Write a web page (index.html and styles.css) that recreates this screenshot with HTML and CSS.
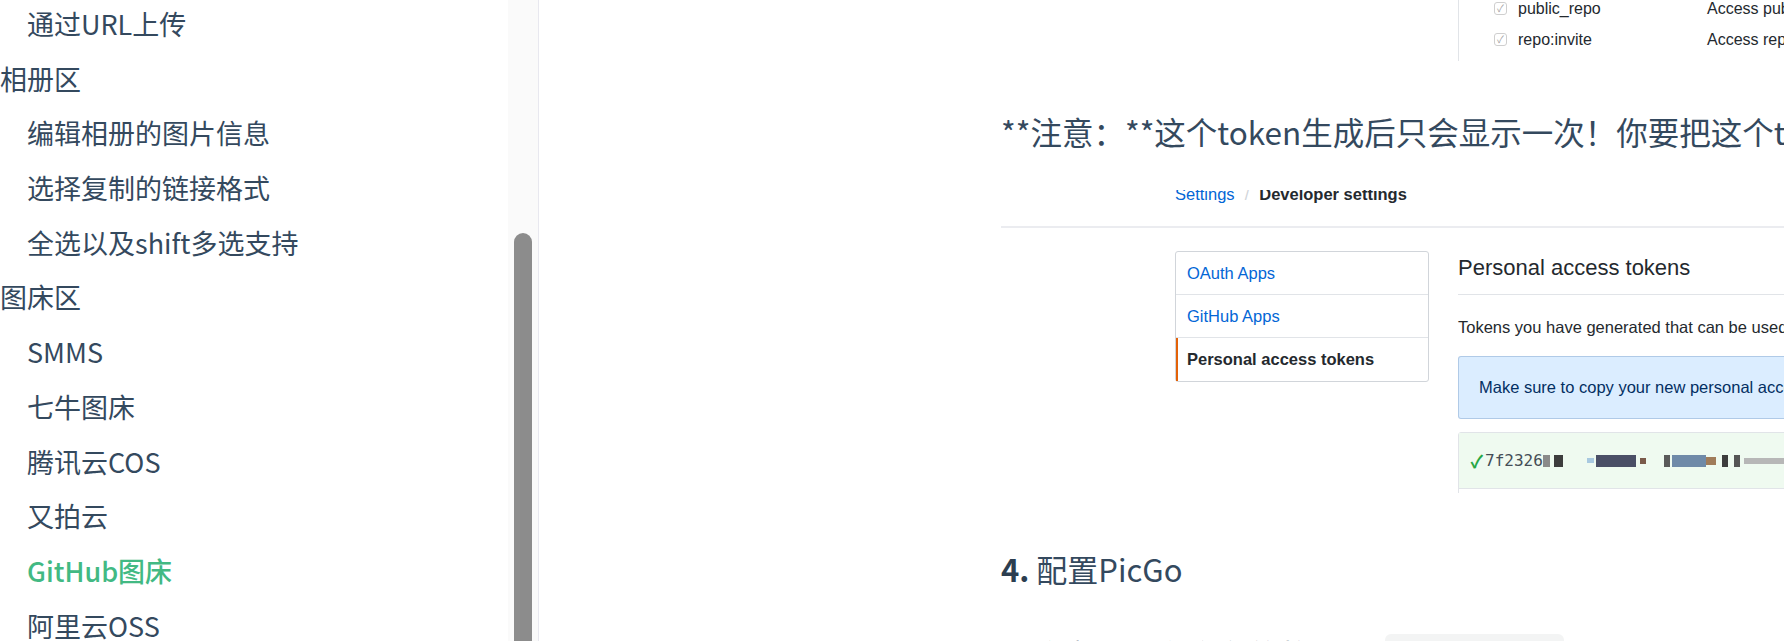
FILE: index.html
```html
<!DOCTYPE html>
<html lang="zh-CN">
<head>
<meta charset="utf-8">
<title>PicGo</title>
<link rel="stylesheet" href="styles.css">
</head>
<body>
<aside class="sidebar">
  <nav class="nav">
    <ul class="toc">
      <li class="sub">通过URL上传</li>
      <li class="top">相册区</li>
      <li class="sub">编辑相册的图片信息</li>
      <li class="sub">选择复制的链接格式</li>
      <li class="sub">全选以及shift多选支持</li>
      <li class="top">图床区</li>
      <li class="sub">SMMS</li>
      <li class="sub">七牛图床</li>
      <li class="sub">腾讯云COS</li>
      <li class="sub">又拍云</li>
      <li class="sub active">GitHub图床</li>
      <li class="sub">阿里云OSS</li>
    </ul>
  </nav>
  <div class="track"><div class="thumb"></div></div>
</aside>
<main class="main">
  <div class="content">
    <div class="shot scopes">
      <div class="scopes-left"></div>
      <div class="scopes-list">
        <div class="scope-row"><span class="cbox">✓</span><span class="scope-name">public_repo</span><span class="scope-desc">Access public repositories</span></div>
        <div class="scope-row"><span class="cbox">✓</span><span class="scope-name">repo:invite</span><span class="scope-desc">Access repository invitations</span></div>
      </div>
    </div>

    <p class="para">**注意：**这个token生成后只会显示一次！你要把这个token复制一下存到安全的地方。</p>

    <div class="shot gh">
      <div class="gh-header">
        <div class="crumbs"><span class="crumb-link">Settings</span><span class="crumb-sep">/</span><span class="crumb-cur">Developer settings</span></div>
      </div>
      <div class="gh-body">
        <div class="gh-menu">
          <div class="gh-item link">OAuth Apps</div>
          <div class="gh-item link">GitHub Apps</div>
          <div class="gh-item selected">Personal access tokens</div>
        </div>
        <div class="gh-panel">
          <div class="gh-title">Personal access tokens</div>
          <div class="gh-text">Tokens you have generated that can be used to access the GitHub API.</div>
          <div class="gh-flash">Make sure to copy your new personal access token now. You won’t be able to see it again!</div>
          <div class="gh-list">
            <div class="gh-token"><span class="tick">✓</span><span class="tok">7f2326</span><span class="px p1"></span><span class="px p2"></span><span class="px p3"></span><span class="px p4"></span><span class="px p5"></span><span class="px p6"></span><span class="px p7"></span><span class="px p8"></span><span class="px p9"></span><span class="px p10"></span><span class="px p11"></span></div>
            <div class="gh-rest"></div>
          </div>
        </div>
      </div>
    </div>

    <h3 class="h3"><strong>4.</strong> 配置PicGo</h3>

    <p class="para last">**注意：**仓库名的格式是<code class="code">用户名/仓库</code>，比如我创建了一个叫做<code class="code">test</code>的仓库。</p>
  </div>
</main>
</body>
</html>
```
FILE: styles.css
```css
* { box-sizing: border-box; }
html, body { margin: 0; padding: 0; }
body {
  width: 1784px;
  height: 641px;
  overflow: hidden;
  display: flex;
  background: #fff;
  font-family: "Noto Sans CJK SC", "Noto Sans", sans-serif;
  color: #34495e;
}

/* sidebar */
.sidebar {
  flex: none;
  width: 539px;
  height: 641px;
  display: flex;
  border-right: 1px solid #e8e8ef;
}
.nav { flex: 1; overflow: hidden; }
.toc {
  list-style: none;
  margin: -3px 0 0;
  padding: 0;
}
.toc li {
  font-size: 27px;
  line-height: 54.7px;
  height: 54.7px;
  white-space: nowrap;
  color: #34495e;
}
.toc .top { padding-left: 0; }
.toc .sub { padding-left: 27px; }
.toc .active { color: #42b983; font-weight: 500; }

.track {
  flex: none;
  width: 30px;
  background: #fafafa;
  padding: 233px 6px 0;
}
.thumb {
  width: 18px;
  height: 420px;
  background: #8c8c8c;
  border-radius: 9px 9px 0 0;
}

/* main */
.main {
  flex: 1;
  overflow: hidden;
  padding-left: 462px;
}
.content { width: 1300px; }

.shot { overflow: hidden; background: #fff; font-family: "Liberation Sans", Arial, sans-serif; color: #24292e; }

/* scopes image */
.scopes { height: 61px; display: flex; }
.scopes-left { width: 458px; border-right: 1px solid #e1e4e8; flex: none; }
.scopes-list { margin-top: -7px; padding-left: 35px; }
.scope-row { height: 31px; display: flex; align-items: center; font-size: 16px; }
.cbox {
  width: 13px; height: 13px;
  border: 1px solid #cfcfcf;
  border-radius: 3px;
  font-size: 10px;
  line-height: 11px;
  text-align: center;
  color: #a0a0a0;
  flex: none;
}
.scope-name { margin-left: 11px; width: 189px; flex: none; }
.scope-desc { white-space: nowrap; }

/* paragraph */
.para {
  margin: 47px 0 0;
  font-size: 31.5px;
  line-height: 46px;
  white-space: nowrap;
  color: #34495e;
}

/* github image */
.gh { height: 303px; margin-top: 36px; }
.gh-header {
  height: 38px;
  overflow: hidden;
  border-bottom: 2px solid #ebecf0;
  padding-left: 174px;
}
.crumbs { margin-top: -6px; font-size: 16.5px; line-height: 20px; white-space: nowrap; }
.crumb-link { color: #0366d6; }
.crumb-sep { color: #d1d5da; margin: 0 10px; }
.crumb-cur { font-weight: bold; color: #24292e; }

.gh-body { display: flex; padding-left: 174px; margin-top: 23px; }
.gh-menu {
  flex: none;
  width: 254px;
  height: 131px;
  border: 1px solid #d1d5da;
  border-radius: 3px;
}
.gh-item {
  height: 43px;
  line-height: 43px;
  padding-left: 11px;
  font-size: 16.5px;
  border-bottom: 1px solid #e1e4e8;
}
.gh-item.link { color: #0366d6; }
.gh-item.selected {
  border-bottom: 0;
  font-weight: bold;
  color: #24292e;
  border-left: 2px solid #e36209;
  padding-left: 9px;
}
.gh-panel { margin-left: 29px; width: 900px; }
.gh-title {
  height: 44px;
  line-height: 34px;
  font-size: 22px;
  border-bottom: 1px solid #e1e4e8;
  white-space: nowrap;
}
.gh-text { margin-top: 20px; line-height: 24px; font-size: 16.5px; white-space: nowrap; }
.gh-flash {
  margin-top: 17px;
  height: 63px;
  line-height: 61px;
  padding-left: 20px;
  font-size: 16.5px;
  background: #dbedff;
  border: 1px solid rgba(4, 66, 137, 0.2);
  border-radius: 3px;
  color: #032f62;
  white-space: nowrap;
}
.gh-list { margin-top: 13px; border: 1px solid #e1e4e8; border-radius: 3px; }
.gh-token {
  height: 56px;
  background: #effaf0;
  border-bottom: 1px solid #e1e4e8;
  display: flex;
  align-items: center;
  padding-left: 12px;
}
.tick { color: #28a745; font-size: 17px; font-weight: bold; margin-right: 2px; }
.tok { font-family: "DejaVu Sans Mono", "Liberation Mono", monospace; font-size: 16px; color: #444d56; }
.px { display: inline-block; height: 12px; }
.p1 { width: 7px; background: #8a8a8a; }
.p2 { width: 9px; background: #3d3d3d; margin-left: 4px; }
.p3 { width: 7px; background: #a8c9e0; margin-left: 24px; height: 5px; }
.p4 { width: 40px; background: #4a4f66; margin-left: 2px; }
.p5 { width: 6px; background: #7a5a4a; margin-left: 4px; height: 6px; }
.p6 { width: 6px; background: #5a5a5a; margin-left: 18px; }
.p7 { width: 34px; background: #6f8aa8; margin-left: 2px; }
.p8 { width: 10px; background: #a07c5a; height: 8px; }
.p9 { width: 6px; background: #3d3d3d; margin-left: 6px; }
.p10 { width: 6px; background: #555; margin-left: 6px; }
.p11 { width: 60px; background: #b7b7b7; margin-left: 4px; height: 6px; }
.gh-rest { height: 40px; }

/* heading */
.h3 {
  margin: 52px 0 0;
  font-size: 31px;
  line-height: 48px;
  font-weight: 400;
  color: #34495e;
  white-space: nowrap;
}
.h3 strong { font-weight: 700; color: #2c3e50; }

.para.last { margin-top: 38px; }
.code {
  font-family: "Noto Sans CJK SC", monospace;
  background: #f3f4f4;
  border-radius: 6px;
  padding: 2px 14px;
  margin: 0 10px;
  font-size: 28px;
}
```
